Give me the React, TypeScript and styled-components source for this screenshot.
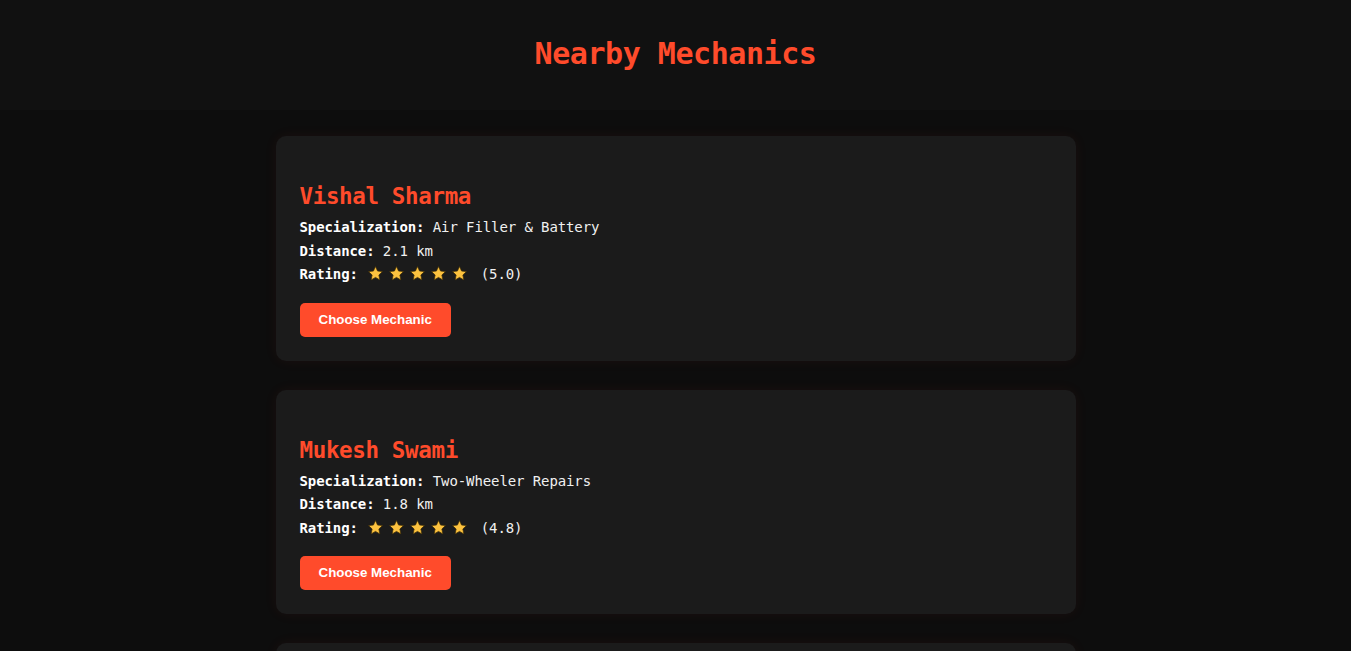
import { FC } from 'react'
import styled, { createGlobalStyle } from 'styled-components'

interface Mechanic {
  name: string
  specialization: string
  distance: string
  rating: number
}

const mechanics: Mechanic[] = [
  { name: 'Vishal Sharma', specialization: 'Air Filler & Battery', distance: '2.1 km', rating: 5.0 },
  { name: 'Mukesh Swami', specialization: 'Two-Wheeler Repairs', distance: '1.8 km', rating: 4.8 },
  { name: 'Rahul Verma', specialization: 'Engine Diagnostics', distance: '3.4 km', rating: 4.6 },
]

const Star: FC = () => (
  <StarIcon viewBox='0 0 24 24'>
    <path d='M12 2.2l2.95 6.35 6.95.8-5.15 4.75 1.4 6.9L12 17.5l-6.15 3.5 1.4-6.9L2.1 9.35l6.95-.8z' />
  </StarIcon>
)

const MechanicCard: FC<{ mechanic: Mechanic }> = ({ mechanic }) => {
  const { name, specialization, distance, rating } = mechanic

  return (
    <Card>
      <Name>{name}</Name>
      <Line>
        <Label>Specialization:</Label> {specialization}
      </Line>
      <Line>
        <Label>Distance:</Label> {distance}
      </Line>
      <Line>
        <Label>Rating:</Label>{' '}
        <Stars aria-label='5 stars'>
          {[0, 1, 2, 3, 4].map(i => (
            <Star key={i} />
          ))}
        </Stars>{' '}
        ({rating.toFixed(1)})
      </Line>
      <ChooseButton>Choose Mechanic</ChooseButton>
    </Card>
  )
}

const App: FC = () => {
  return (
    <>
      <GlobalStyle />
      <Header>
        <Title>Nearby Mechanics</Title>
      </Header>
      <List>
        {mechanics.map(m => (
          <MechanicCard key={m.name} mechanic={m} />
        ))}
      </List>
    </>
  )
}

export default App

const GlobalStyle = createGlobalStyle`
  body {
    margin: 0;
    background: #0d0d0d;
    color: #eeeeee;
    font-family: 'DejaVu Sans Mono', 'Liberation Mono', monospace;
  }
`

const Header = styled.header`
  background: #111111;
  height: 110px;
  display: flex;
  align-items: center;
  justify-content: center;
`

const Title = styled.h1`
  margin: 0;
  color: #ff4b2b;
  font-size: 30px;
  letter-spacing: -0.45px;
  font-weight: bold;
  line-height: 1;
  padding-bottom: 2px;
`

const List = styled.main`
  display: flex;
  flex-direction: column;
  align-items: center;
  gap: 29px;
  padding: 26px 0 30px;
`

const Card = styled.section`
  width: 800px;
  box-sizing: border-box;
  background: #1b1b1b;
  border-radius: 10px;
  padding: 24px;
  box-shadow: 0 0 14px rgba(255, 75, 43, 0.06);
`

const Name = styled.h2`
  margin: 22px 0 6px;
  color: #ff4b2b;
  font-size: 22.5px;
  letter-spacing: -0.35px;
  line-height: 28px;
  font-weight: bold;
`

const Line = styled.p`
  margin: 0;
  font-size: 14px;
  letter-spacing: -0.1px;
  line-height: 23.5px;
  color: #f0f0f0;
`

const Label = styled.strong`
  color: #ffffff;
  font-weight: bold;
`

const Stars = styled.span`
  display: inline-flex;
  gap: 4.2px;
  margin: 0 4px 0 0.5px;
  vertical-align: -3px;
`

const StarIcon = styled.svg`
  width: 17px;
  height: 17px;
  fill: #fcc23f;
  stroke: #3a2a05;
  stroke-width: 1;
  stroke-linejoin: round;
`

const ChooseButton = styled.button`
  display: block;
  margin-top: 16px;
  background: #ff4b2b;
  color: #ffffff;
  border: none;
  border-radius: 5px;
  padding: 10px 19px;
  font-family: 'Liberation Sans', Arial, sans-serif;
  font-size: 13.33px;
  line-height: 14px;
  font-weight: bold;
  cursor: pointer;
`
